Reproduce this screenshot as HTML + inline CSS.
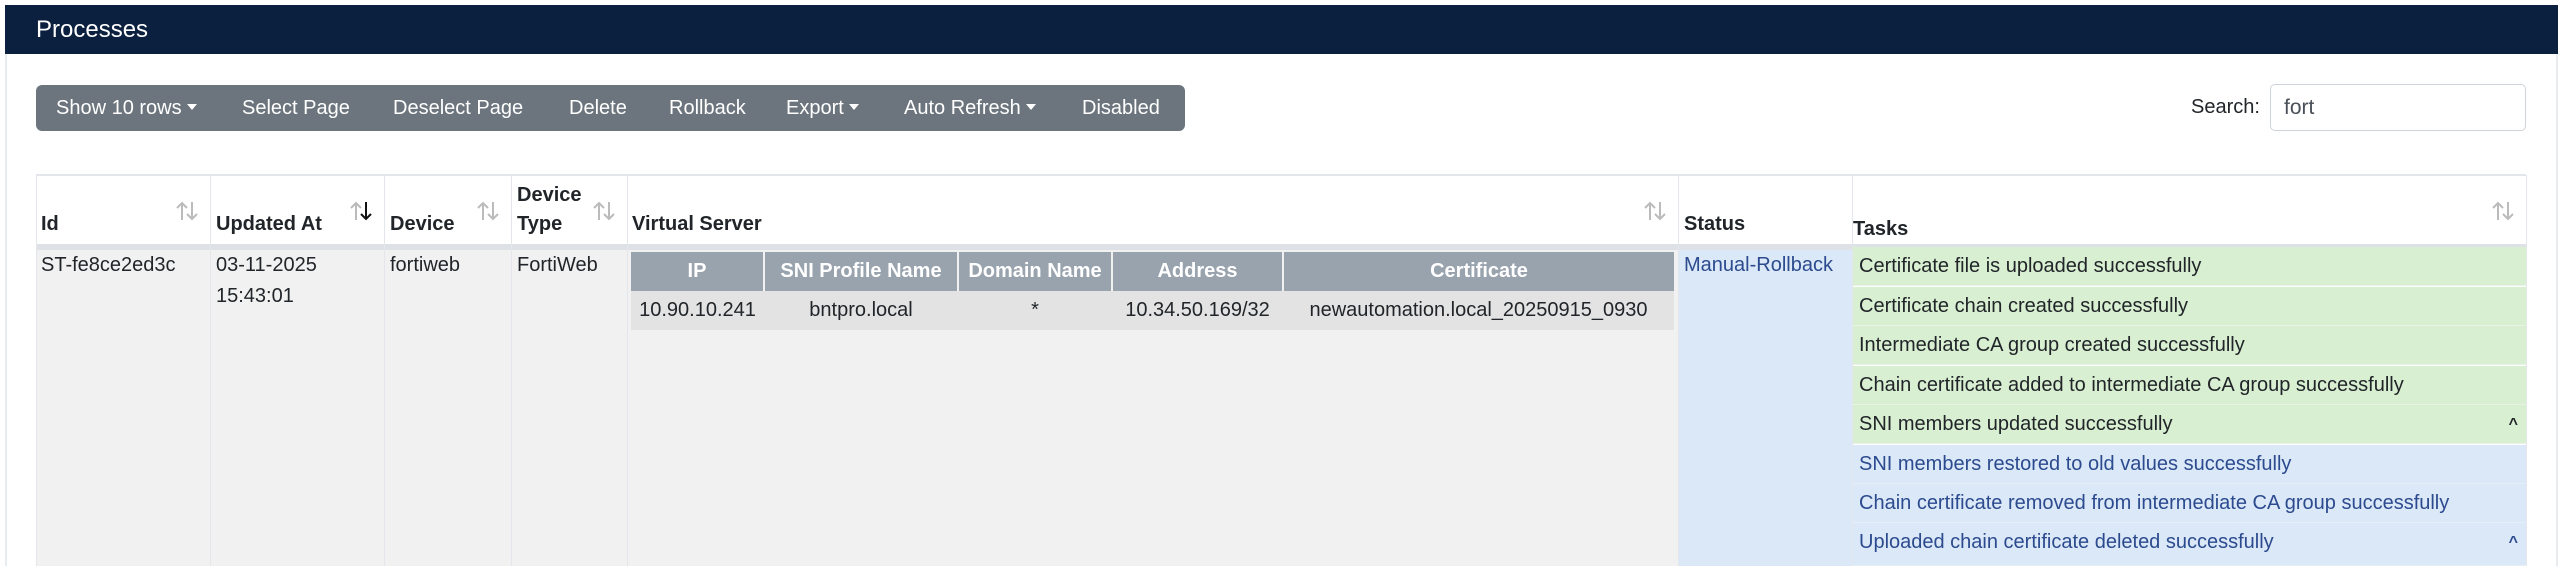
<!DOCTYPE html>
<html style="width:2564px;height:566px;overflow:hidden"><head><meta charset="utf-8"><style>
*{box-sizing:border-box;margin:0;padding:0}
body{width:2564px;height:566px;overflow:hidden;background:#fff;font-family:"Liberation Sans",Arial,sans-serif;color:#212529;font-size:20px;position:relative}
.abs{position:absolute}
#frame{left:5px;top:5px;width:2553px;height:561px;border-left:2px solid #e9ecef;border-right:2px solid #e9ecef}
#hdr{left:5px;top:5px;width:2553px;height:49px;background:#0b1f3f;color:#fff;font-size:24px;line-height:49px;padding-left:31px}
#tb{left:36px;top:85px;width:1149px;height:46px;background:#6c757d;border-radius:6px}
.btn{position:absolute;top:85px;line-height:46px;color:#fff;font-size:20px;white-space:nowrap}
.car{display:inline-block;width:0;height:0;border-left:5px solid transparent;border-right:5px solid transparent;border-top:6px solid #fff;vertical-align:middle;margin-left:5px;margin-top:-3px}
#sl{left:2191px;top:96px;font-size:20px}
#si{left:2270px;top:84px;width:256px;height:47px;border:1px solid #ced4da;border-radius:5px;padding-left:13px;line-height:45px;font-size:21px;color:#495057}
.vl{position:absolute;top:175px;height:391px;width:1px;background:#e3e6ea}
.th{position:absolute;font-weight:bold;font-size:20px;line-height:29px}
.sort{position:absolute;top:201px;width:22px;height:20px}
.td{position:absolute;line-height:31px}
.it{position:absolute;color:#fff;font-weight:bold;text-align:center;top:252px;height:39px;line-height:39px;background:#99a3ae;font-size:20px}
.ic{position:absolute;text-align:center;top:291px;height:39px;line-height:39px;background:#e3e3e3}
.task{position:absolute;left:1853px;width:673px;height:39px;line-height:39px;padding-left:6px;border-bottom:1px solid #e9f2e6}
.g{background:#d8efd1;color:#212529}
.b{background:#dae8f8;color:#2c4a8e;border-bottom-color:#e6eef8}
.up{position:absolute;right:8px;top:0;font-weight:bold;font-size:16px}
</style></head><body>
<svg width="0" height="0" style="position:absolute"><defs>
<g id="su"><path d="M6 19V2M1 7l5-5 5 5" fill="none" stroke-width="2"/></g>
<g id="sd"><path d="M16 1v17M11 13l5 5 5-5" fill="none" stroke-width="2"/></g>
</defs></svg>
<div id="frame" class="abs"></div>
<div id="hdr" class="abs">Processes</div>
<div id="tb" class="abs"></div>
<div class="btn" style="left:56px">Show 10 rows<span class="car"></span></div>
<div class="btn" style="left:242px">Select Page</div>
<div class="btn" style="left:393px">Deselect Page</div>
<div class="btn" style="left:569px">Delete</div>
<div class="btn" style="left:669px">Rollback</div>
<div class="btn" style="left:786px">Export<span class="car"></span></div>
<div class="btn" style="left:904px">Auto Refresh<span class="car"></span></div>
<div class="btn" style="left:1082px">Disabled</div>
<div id="sl" class="abs">Search:</div>
<div id="si" class="abs">fort</div>

<div class="abs" style="left:36px;top:174px;width:2490px;height:2px;background:#e3e6ea"></div>
<div class="abs" style="left:36px;top:244px;width:2490px;height:6px;background:#dee2e6"></div>
<div class="abs" style="left:37px;top:250px;width:1641px;height:316px;background:#f1f1f1"></div>
<div class="abs" style="left:1679px;top:250px;width:173px;height:316px;background:#dae8f8"></div>
<div class="vl" style="left:36px"></div>
<div class="vl" style="left:210px"></div>
<div class="vl" style="left:384px"></div>
<div class="vl" style="left:511px"></div>
<div class="vl" style="left:627px"></div>
<div class="vl" style="left:1678px"></div>
<div class="vl" style="left:1852px"></div>
<div class="vl" style="left:2526px"></div>

<div class="th" style="left:41px;top:210px">Id</div>
<svg class="sort" style="left:176px"><use href="#su" stroke="#bbb"/><use href="#sd" stroke="#bbb"/></svg>
<div class="th" style="left:216px;top:210px">Updated At</div>
<svg class="sort" style="left:350px"><use href="#su" stroke="#bbb"/><use href="#sd" stroke="#111"/></svg>
<div class="th" style="left:390px;top:210px">Device</div>
<svg class="sort" style="left:477px"><use href="#su" stroke="#bbb"/><use href="#sd" stroke="#bbb"/></svg>
<div class="th" style="left:517px;top:181px">Device<br>Type</div>
<svg class="sort" style="left:593px"><use href="#su" stroke="#bbb"/><use href="#sd" stroke="#bbb"/></svg>
<div class="th" style="left:632px;top:210px">Virtual Server</div>
<svg class="sort" style="left:1644px"><use href="#su" stroke="#bbb"/><use href="#sd" stroke="#bbb"/></svg>
<div class="th" style="left:1684px;top:210px">Status</div>
<div class="th" style="left:1853px;top:215px">Tasks</div>
<svg class="sort" style="left:2492px"><use href="#su" stroke="#bbb"/><use href="#sd" stroke="#bbb"/></svg>

<div class="td" style="left:41px;top:250px">ST-fe8ce2ed3c</div>
<div class="td" style="left:216px;top:250px">03-11-2025<br>15:43:01</div>
<div class="td" style="left:390px;top:250px">fortiweb</div>
<div class="td" style="left:517px;top:250px">FortiWeb</div>
<div class="td" style="left:1684px;top:250px;color:#2c4a8e">Manual-Rollback</div>

<div class="it" style="left:631px;width:132px">IP</div>
<div class="it" style="left:765px;width:192px">SNI Profile Name</div>
<div class="it" style="left:959px;width:152px">Domain Name</div>
<div class="it" style="left:1113px;width:169px">Address</div>
<div class="it" style="left:1284px;width:390px">Certificate</div>
<div class="ic" style="left:631px;width:133px">10.90.10.241</div>
<div class="ic" style="left:764px;width:194px">bntpro.local</div>
<div class="ic" style="left:958px;width:154px">*</div>
<div class="ic" style="left:1112px;width:171px">10.34.50.169/32</div>
<div class="ic" style="left:1283px;width:391px">newautomation.local_20250915_0930</div>

<div class="task g" style="top:247px">Certificate file is uploaded successfully</div>
<div class="task g" style="top:287px">Certificate chain created successfully</div>
<div class="task g" style="top:326px">Intermediate CA group created successfully</div>
<div class="task g" style="top:366px">Chain certificate added to intermediate CA group successfully</div>
<div class="task g" style="top:405px">SNI members updated successfully<span class="up">^</span></div>
<div class="task b" style="top:445px">SNI members restored to old values successfully</div>
<div class="task b" style="top:484px">Chain certificate removed from intermediate CA group successfully</div>
<div class="task b" style="top:523px;height:43px">Uploaded chain certificate deleted successfully<span class="up">^</span></div>
</body></html>
